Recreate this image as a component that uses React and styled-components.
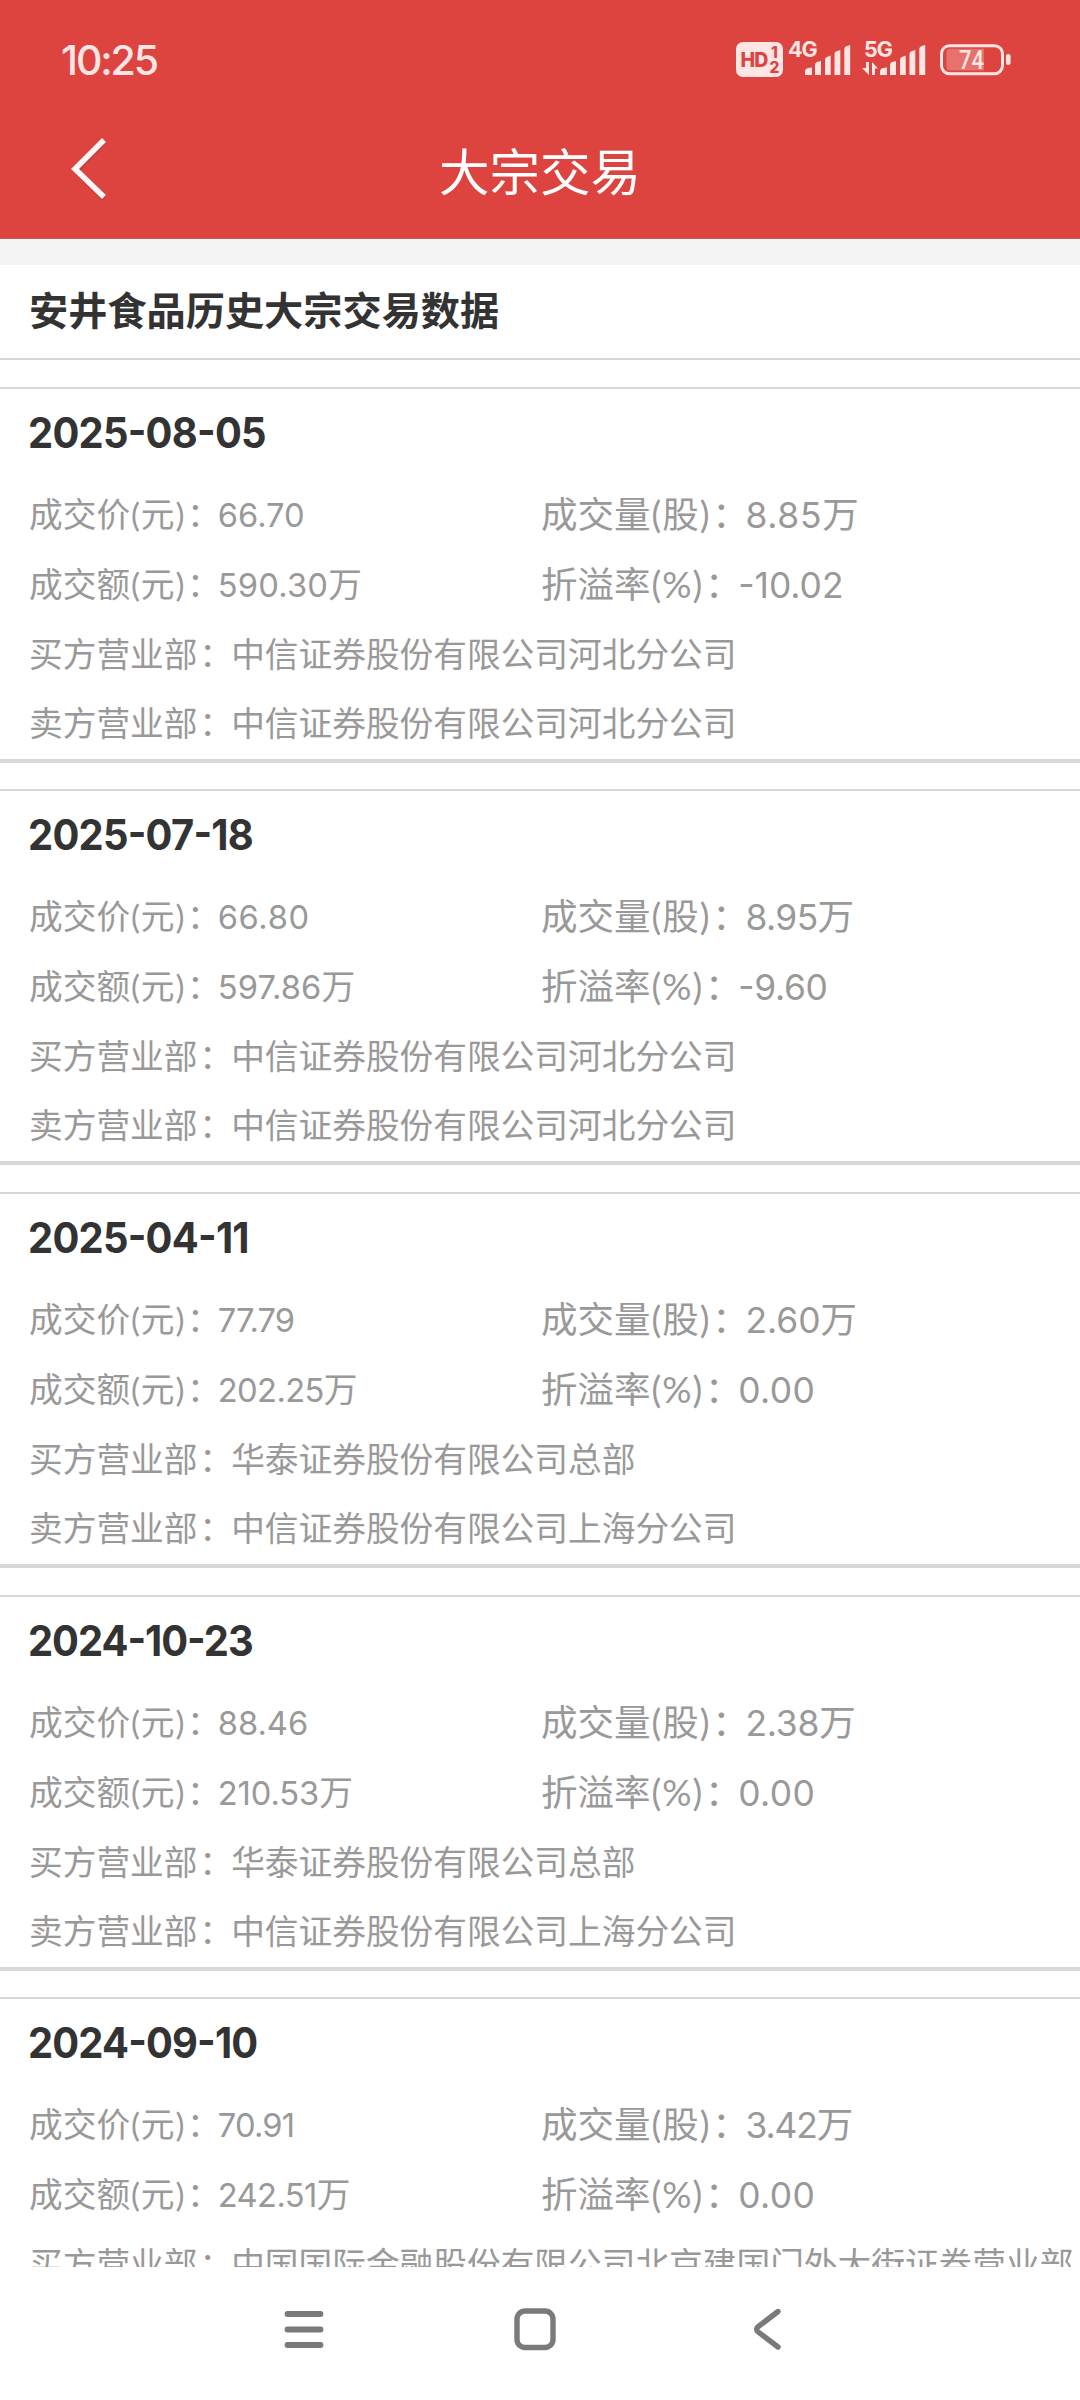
import React from "react";
import styled, { createGlobalStyle } from "styled-components";

const colors = {
  red: "#dd4440",
  pale: "#ffe6e4",
  dark: "#333333",
  gray: "#999999",
  line: "#d8d8d8",
  nav: "#7a7a7a",
};

const HB = "中信证券股份有限公司河北分公司";
const SH = "中信证券股份有限公司上海分公司";
const HT = "华泰证券股份有限公司总部";
const CICC = "中国国际金融股份有限公司北京建国门外大街证券营业部";

// each value is [text, letter spacing]
const records = [
  { date: ["2025-08-05", -0.8], price: ["66.70", 0], volume: ["8.85", 0.7], amount: ["590.30", 0.2], rate: ["-10.02", 0], buyer: HB, seller: HB },
  { date: ["2025-07-18", -0.8], price: ["66.80", 0.6], volume: ["8.95", -0.6], amount: ["597.86", 0.1], rate: ["-9.60", -0.3], buyer: HB, seller: HB },
  { date: ["2025-04-11", -0.8], price: ["77.79", -0.9], volume: ["2.60", 0], amount: ["202.25", -0.6], rate: ["0.00", 0.4], buyer: HT, seller: SH },
  { date: ["2024-10-23", -1.1], price: ["88.46", 0], volume: ["2.38", -0.2], amount: ["210.53", -0.1], rate: ["0.00", 0.4], buyer: HT, seller: SH },
  { date: ["2024-09-10", -0.9], price: ["70.91", -0.8], volume: ["3.42", -1.1], amount: ["242.51", -0.6], rate: ["0.00", 0.4], buyer: CICC, seller: CICC },
];

const Signal = () => (
  <svg width="46" height="30" viewBox="0 0 46 30" fill={colors.pale}>
    <path d="M0 30V26.5Q0 24 3 23L7 22.5V30Z" />
    <path d="M10 30V20Q10 17.5 12 17L16 16V30Z" />
    <path d="M20 30V14.5Q20 12.5 22 12L25.7 10.5V30Z" />
    <path d="M29.5 30V9Q29.5 7 31.5 6.3L35.3 5V30Z" />
    <path d="M39.3 30V4Q39.3 2 41.3 1.3L45.2 0V30Z" />
  </svg>
);

const Battery = () => (
  <svg width="72" height="32" viewBox="0 0 72 32">
    <rect x="1.5" y="1.7" width="61" height="28" rx="8" fill="none" stroke={colors.pale} strokeWidth="3" />
    <path d="M9.5 4.8H44V26.5H9.5Q6.5 26.5 6.5 22V9Q6.5 4.8 9.5 4.8Z" fill={colors.pale} opacity="0.28" />
    <rect x="66" y="10" width="4.6" height="11" rx="2.3" fill={colors.pale} />
    <text
      x="19"
      y="25"
      fontFamily="Roboto"
      fontWeight="500"
      fontSize="26"
      fill={colors.pale}
      textLength="25"
      lengthAdjust="spacingAndGlyphs"
    >
      74
    </text>
  </svg>
);

const DataArrows = () => (
  <svg width="17" height="13" viewBox="0 0 17 13" fill={colors.pale}>
    <path d="M4 0H7V13L0 6H4Z" />
    <path d="M10 13V0L16 6.5H13V13Z" />
  </svg>
);

const Value = ({ data, unit = "" }) => (
  <>
    <Num $spacing={data[1]}>{data[0]}</Num>
    {unit}
  </>
);

const Label = ({ name, unit }) => (
  <>
    {name}
    <Paren>(</Paren>
    {unit}
    <Paren>)</Paren>
    <Colon>：</Colon>
  </>
);

const Record = ({ item }) => (
  <RecordStyled>
    <DateLine>
      <DateNum $spacing={item.date[1]}>{item.date[0]}</DateNum>
    </DateLine>
    <Row>
      <Cell>
        <Label name="成交价" unit="元" />
        <Value data={item.price} />
      </Cell>
      <Cell $large>
        <Label name="成交量" unit="股" />
        <Value data={item.volume} unit="万" />
      </Cell>
    </Row>
    <Row>
      <Cell>
        <Label name="成交额" unit="元" />
        <Value data={item.amount} unit="万" />
      </Cell>
      <Cell $large>
        <Label name="折溢率" unit="%" />
        <Value data={item.rate} />
      </Cell>
    </Row>
    <BrokerRow>
      买方营业部<Colon>：</Colon>
      {item.buyer}
    </BrokerRow>
    <BrokerRow>
      卖方营业部<Colon>：</Colon>
      {item.seller}
    </BrokerRow>
  </RecordStyled>
);

const App = () => (
  <Screen>
    <GlobalStyle />
    <Header>
      <StatusBar>
        <Clock>10:25</Clock>
        <StatusIcons>
          <HdBadge>
            <span>HD</span>
            <HdNumbers>
              <span>1</span>
              <span>2</span>
            </HdNumbers>
          </HdBadge>
          <Network $width={74}>
            <NetworkLabel>4G</NetworkLabel>
            <SignalRow $indent={17}>
              <Signal />
            </SignalRow>
          </Network>
          <Network $width={78}>
            <NetworkLabel $indent={2}>5G</NetworkLabel>
            <SignalRow $indent={0}>
              <DataArrows />
              <Signal />
            </SignalRow>
          </Network>
          <BatterySlot>
            <Battery />
          </BatterySlot>
        </StatusIcons>
      </StatusBar>
      <TitleBar>
        <BackButton aria-label="back">
          <svg width="40" height="66" viewBox="0 0 40 66" fill="none">
            <path d="M34 5L6 34L34 62" stroke="#a33a37" strokeOpacity="0.6" strokeWidth="5" />
            <path d="M34 3L5 32L34 60" stroke="#fff8f6" strokeWidth="5.6" />
          </svg>
        </BackButton>
        <PageTitle>大宗交易</PageTitle>
      </TitleBar>
    </Header>
    <Content>
      <SectionTitle>安井食品历史大宗交易数据</SectionTitle>
      {records.map((item) => (
        <Record key={item.date[0]} item={item} />
      ))}
    </Content>
    <NavBar>
      <svg width="42" height="44" viewBox="0 0 42 44" stroke={colors.nav} strokeWidth="5.8" strokeLinecap="round">
        <path d="M5.5 7H38.5M5.5 22.5H38.5M5.5 38H38.5" />
      </svg>
      <svg width="42" height="44" viewBox="0 0 42 44" fill="none" stroke={colors.nav} strokeWidth="5.4">
        <rect x="3" y="4" width="36" height="36.5" rx="8" />
      </svg>
      <svg width="42" height="44" viewBox="0 0 42 44" fill="none" stroke={colors.nav} strokeWidth="5.4" strokeLinecap="round">
        <path d="M32 4.5L12 19.8Q9.3 22.3 12 24.8L32 40" />
      </svg>
    </NavBar>
  </Screen>
);

const GlobalStyle = createGlobalStyle`
  body {
    margin: 0;
    background: #fff;
  }
`;

const Screen = styled.div`
  display: flex;
  flex-direction: column;
  width: 1080px;
  height: 2400px;
  overflow: hidden;
  background: #fff;
  font-family: Lato, "Noto Sans CJK SC", sans-serif;
`;

const Header = styled.header`
  flex: none;
  height: 239px;
  box-sizing: border-box;
  border-bottom: 1px solid #b8605d;
  background: ${colors.red};
`;

const StatusBar = styled.div`
  display: flex;
  justify-content: space-between;
  height: 108px;
  padding: 0 68px 0 61px;
  color: ${colors.pale};
  font-family: Inter, sans-serif;
`;

const Clock = styled.div`
  padding-top: 30px;
  font-size: 41px;
  line-height: 60px;
  font-weight: 500;
  letter-spacing: -2.1px;
`;

const StatusIcons = styled.div`
  display: flex;
  align-items: flex-start;
  padding-top: 41px;

  svg {
    display: block;
    flex: none;
  }
`;

const HdBadge = styled.div`
  display: flex;
  align-items: center;
  justify-content: center;
  gap: 2px;
  width: 47px;
  height: 35px;
  margin: 1px 5px 0 0;
  border-radius: 7px;
  background: ${colors.pale};
  color: ${colors.red};
  font-size: 19.5px;
  line-height: 20px;
  font-weight: 800;
  letter-spacing: -0.8px;
`;

const HdNumbers = styled.div`
  display: flex;
  flex-direction: column;
  font-size: 15.5px;
  line-height: 15px;
  text-align: center;
`;

const Network = styled.div`
  display: flex;
  flex-direction: column;
  width: ${(props) => props.$width}px;
  height: 34px;
`;

const NetworkLabel = styled.div`
  height: 4px;
  padding-left: ${(props) => props.$indent || 0}px;
  font-size: 21.5px;
  line-height: 17px;
  font-weight: 700;
  letter-spacing: -1px;
`;

const SignalRow = styled.div`
  display: flex;
  align-items: flex-end;
  gap: 1px;
  padding-left: ${(props) => props.$indent}px;
`;

const BatterySlot = styled.div`
  padding-top: 3px;
`;

const TitleBar = styled.div`
  display: grid;
  grid-template-columns: 140px 1fr 140px;
  align-items: center;
  height: 124px;
`;

const BackButton = styled.button`
  padding: 0 0 0 70px;
  border: 0;
  background: none;
  line-height: 0;
  text-align: left;
`;

const PageTitle = styled.h1`
  margin: 0;
  padding-top: 3px;
  color: #fff;
  font-size: 50.5px;
  line-height: 80px;
  font-weight: 400;
  text-align: center;
`;

const Content = styled.main`
  flex: 1;
  min-height: 0;
  overflow: hidden;
  border-top: 26px solid #f4f4f4;
`;

const SectionTitle = styled.h2`
  box-sizing: border-box;
  height: 95px;
  margin: 0 0 26.9px;
  padding-left: 29px;
  border-bottom: 2px solid ${colors.line};
  color: ${colors.dark};
  font-size: 39.2px;
  line-height: 90px;
  font-weight: 700;
`;

const RecordStyled = styled.section`
  box-sizing: border-box;
  height: 376px;
  margin-bottom: 26.55px;
  border-top: 2px solid ${colors.line};
  border-bottom: 4px solid ${colors.line};
  color: ${colors.gray};
`;

const DateLine = styled.div`
  height: 90px;
  padding-left: 28px;
  color: ${colors.dark};
  font-size: 44px;
  line-height: 85px;
  font-weight: 700;
`;

const Row = styled.div`
  display: grid;
  grid-template-columns: 512px 1fr;
  height: 70px;
  padding-left: 29px;
`;

const Cell = styled.div`
  font-size: ${(props) => (props.$large ? "36.5px" : "33.7px")};
  line-height: ${(props) => (props.$large ? "70px" : "71px")};
  white-space: nowrap;
`;

const Num = styled.span`
  margin-left: -0.04em;
  font-family: Inter, sans-serif;
  font-size: 0.97em;
  font-feature-settings: "case" 1;
  letter-spacing: ${(props) => props.$spacing}px;
`;

// dates are set in a slightly condensed bold
const DateNum = styled(Num)`
  display: inline-block;
  margin-left: 0;
  transform: scaleX(0.935);
  transform-origin: left center;
`;

const Paren = styled.span`
  display: inline-block;
  width: 0.32em;
  text-align: center;
`;

const Colon = styled.span`
  padding-left: 0.05em;
  margin-right: -0.05em;
`;

const BrokerRow = styled.div`
  height: 69px;
  padding-left: 29px;
  font-size: 33.7px;
  line-height: 70px;
  white-space: nowrap;
`;

const NavBar = styled.nav`
  display: flex;
  flex: none;
  justify-content: center;
  gap: 190px;
  height: 133px;
  padding-top: 40px;
  padding-right: 10px;
  box-sizing: border-box;
`;

export default App;
